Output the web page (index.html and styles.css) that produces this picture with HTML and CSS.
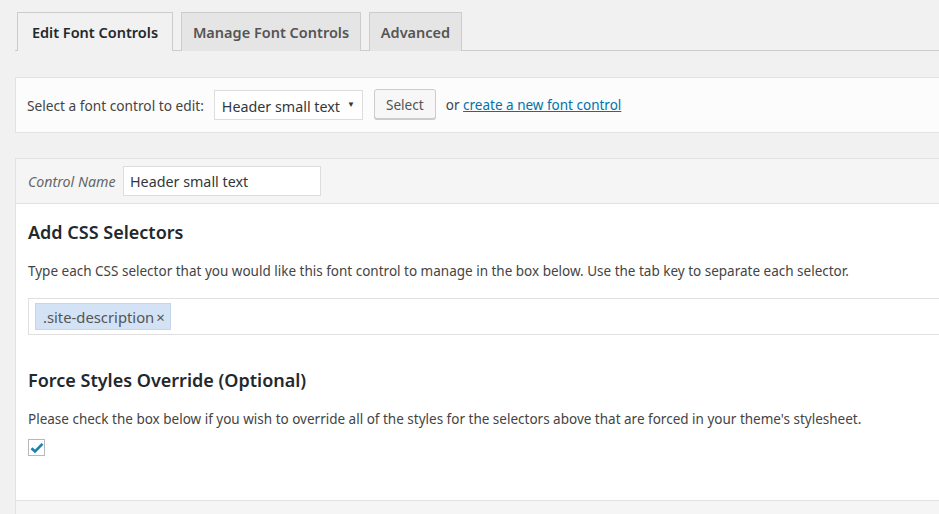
FILE: index.html
```html
<!DOCTYPE html>
<html>
<head>
<meta charset="utf-8">
<link rel="stylesheet" href="styles.css">
</head>
<body>
<div class="wrap">
  <nav class="tabs">
    <a class="tab active">Edit Font Controls</a>
    <a class="tab">Manage Font Controls</a>
    <a class="tab">Advanced</a>
  </nav>

  <div class="select-panel">
    <span class="label">Select a font control to edit:</span>
    <div class="dropdown"><span>Header small text</span><span class="arrow">▼</span></div>
    <button class="btn">Select</button>
    <span class="or">or <a class="link">create a new font control</a></span>
  </div>

  <div class="main-panel">
    <div class="name-row">
      <span class="name-label">Control Name</span>
      <div class="name-input">Header small text</div>
    </div>
    <div class="body">
      <h2 class="heading">Add CSS Selectors</h2>
      <p class="desc">Type each CSS selector that you would like this font control to manage in the box below. Use the tab key to separate each selector.</p>
      <div class="tagbox">
        <span class="tag">.site-description<span class="x">×</span></span>
      </div>
      <h2 class="heading second">Force Styles Override (Optional)</h2>
      <p class="desc">Please check the box below if you wish to override all of the styles for the selectors above that are forced in your theme's stylesheet.</p>
      <div class="checkbox">
        <svg width="14" height="12" viewBox="0 0 14 12"><path d="M1.5 6.2 L5 9.5 L12.5 1.8" fill="none" stroke="#1b82ad" stroke-width="2.6" stroke-linejoin="miter"/></svg>
      </div>
    </div>
    <div class="footer"></div>
  </div>
</div>
</body>
</html>
```

FILE: styles.css
```css
html, body {
  margin: 0;
  padding: 0;
  background: #f1f1f1;
  font-family: "Noto Sans", "Open Sans", sans-serif;
  color: #444;
  font-size: 13.5px;
  overflow: hidden;
}

.wrap {
  padding-left: 15px;
  padding-top: 12px;
}

.tabs {
  display: flex;
  gap: 8px;
  padding-left: 2px;
  border-bottom: 1px solid #ccc;
  height: 38px;
}

.tab {
  box-sizing: border-box;
  height: 39px;
  border: 1px solid #ccc;
  border-bottom: none;
  background: #e5e5e5;
  color: #555;
  font-size: 14.5px;
  font-weight: 600;
  display: flex;
  align-items: center;
  justify-content: center;
}

.tab:nth-child(1) { width: 156px; }
.tab:nth-child(2) { width: 180px; }
.tab:nth-child(3) { width: 93px; }

.tab.active {
  background: #f1f1f1;
  color: #23282d;
}

.select-panel {
  margin-top: 26px;
  height: 56px;
  box-sizing: border-box;
  background: #fcfcfc;
  border: 1px solid #e2e2e2;
  border-right: none;
  display: flex;
  align-items: center;
  padding-left: 11px;
}

.label {
  color: #444;
  font-size: 13.7px;
}

.dropdown {
  margin-left: 10px;
  width: 149px;
  height: 30px;
  box-sizing: border-box;
  border: 1px solid #ddd;
  background: #fff;
  display: flex;
  align-items: center;
  justify-content: space-between;
  padding: 2px 7px 0 7px;
  font-size: 14.3px;
  color: #32373c;
}

.arrow {
  font-size: 8px;
  margin-top: -6px;
}

.btn {
  margin-left: 11px;
  width: 62px;
  height: 30px;
  margin-top: -2px;
  border: 1px solid #ccc;
  border-radius: 3px;
  background: #f7f7f7;
  box-shadow: 0 1px 0 #ccc;
  font-family: inherit;
  font-size: 13.6px;
  color: #555;
  padding: 0;
}

.or {
  margin-left: 10px;
}

.link {
  color: #0073aa;
  text-decoration: underline;
}

.main-panel {
  margin-top: 25px;
  background: #fff;
  border: 1px solid #e2e2e2;
  border-right: none;
}

.name-row {
  height: 44px;
  background: #f5f5f5;
  border-bottom: 1px solid #e2e2e2;
  display: flex;
  align-items: center;
  padding-left: 12px;
}

.name-label {
  font-style: italic;
  color: #666;
  width: 95px;
  font-size: 14.2px;
}

.name-input {
  box-sizing: border-box;
  width: 198px;
  height: 30px;
  border: 1px solid #ddd;
  background: #fff;
  font-size: 14.3px;
  color: #32373c;
  padding-left: 6px;
  display: flex;
  align-items: center;
}

.body {
  padding: 15px 0 44px 12px;
}

.heading {
  margin: 0;
  font-size: 18px;
  font-weight: 600;
  color: #23282d;
  line-height: 26px;
}

.heading.second {
  margin-top: 32px;
}

.desc {
  margin: 14px 0 0 0;
  line-height: 24px;
}

.tagbox {
  margin-top: 15px;
  height: 37px;
  box-sizing: border-box;
  border: 1px solid #e0e0e0;
  border-right: none;
  display: flex;
  align-items: center;
  padding-left: 6px;
}

.tag {
  background: #d3e2f4;
  border: 1px solid #c4d6ec;
  height: 27px;
  box-sizing: border-box;
  display: flex;
  align-items: center;
  padding: 0 5px 0 7px;
  font-size: 14.8px;
  color: #555;
}

.x {
  margin-left: 2px;
  font-size: 15px;
  color: #555;
}

.checkbox {
  margin-top: 8px;
  width: 17px;
  height: 17px;
  box-sizing: border-box;
  border: 1px solid #b4b9be;
  background: #fff;
  display: flex;
  align-items: center;
  justify-content: center;
}

.footer {
  height: 14px;
  background: #f5f5f5;
  border-top: 1px solid #e2e2e2;
}
```
